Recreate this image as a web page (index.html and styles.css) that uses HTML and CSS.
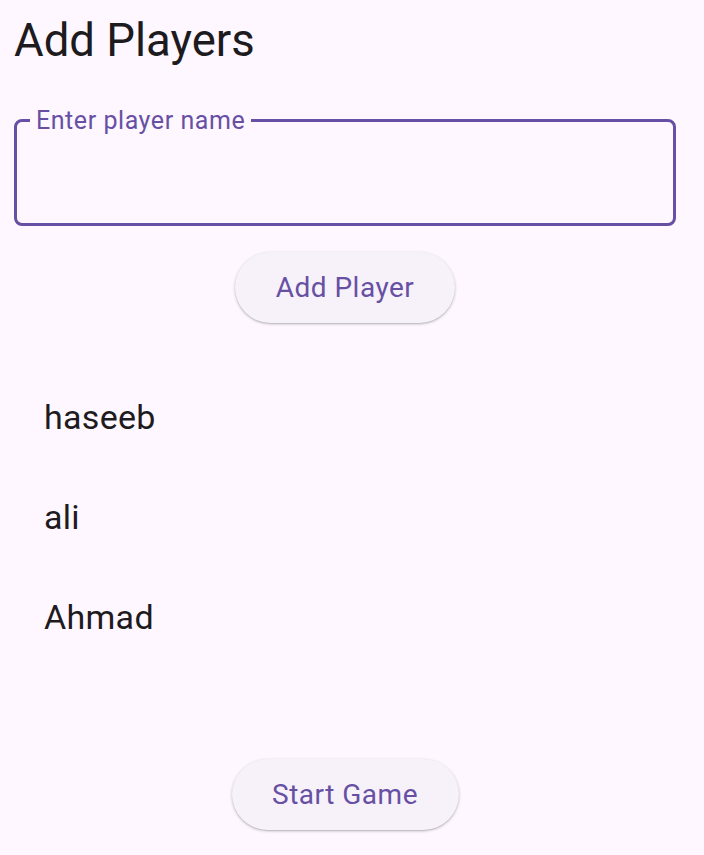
FILE: index.html
```html
<!DOCTYPE html>
<html>
<head>
<meta charset="utf-8">
<link rel="stylesheet" href="styles.css">
</head>
<body>
<div class="page">
  <h1 class="title">Add Players</h1>
  <fieldset class="field">
    <legend class="field-label">Enter player name</legend>
    <input class="field-input" type="text">
  </fieldset>
  <div class="center-row add-row">
    <button class="pill-btn add-btn">Add Player</button>
  </div>
  <ul class="players">
    <li class="player">haseeb</li>
    <li class="player">ali</li>
    <li class="player">Ahmad</li>
  </ul>
  <div class="center-row start-row">
    <button class="pill-btn start-btn">Start Game</button>
  </div>
</div>
</body>
</html>
```
FILE: styles.css
```css
html, body {
  margin: 0;
  padding: 0;
  background: #FEF7FF;
}
body {
  font-family: Roboto, "Noto Sans", sans-serif;
  color: #1D1B20;
}
.page {
  height: 855px;
  box-sizing: border-box;
  padding: 0 28px 0 14px;
  display: flex;
  flex-direction: column;
}
.title {
  margin: 18px 0 0 0;
  font-size: 45.5px;
  line-height: 45px;
  font-weight: 400;
  height: 45px;
}
.field {
  margin: 45px 0 0 0;
  padding: 0;
  border: 3px solid #6750A4;
  border-radius: 8px;
  min-width: 0;
}
.field-label {
  margin-left: 13px;
  padding: 0 6px;
  font-size: 25px;
  line-height: 25px;
  color: #6750A4;
  letter-spacing: 0.55px;
}
.field-input {
  display: block;
  border: 0;
  background: transparent;
  outline: none;
  width: 100%;
  height: 90px;
  font-size: 30px;
  font-family: inherit;
  padding: 0 20px;
  box-sizing: border-box;
}
.center-row {
  display: flex;
  justify-content: center;
}
.add-row {
  margin-top: 26px;
}
.pill-btn {
  border: 0;
  background: #F7F2FA;
  color: #6750A4;
  font-family: Roboto, "Noto Sans", sans-serif;
  font-size: 28px;
  letter-spacing: 0.5px;
  height: 71px;
  border-radius: 36px;
  box-shadow: 0 1px 3px rgba(0, 0, 0, 0.25), 0 1px 1px rgba(0, 0, 0, 0.08);
  padding: 0;
}
.add-btn {
  width: 220px;
}
.start-btn {
  width: 227px;
}
.players {
  list-style: none;
  margin: 44px 0 0 0;
  padding: 0;
}
.player {
  height: 100px;
  line-height: 100px;
  padding-left: 30px;
  font-size: 34px;
  letter-spacing: 0.3px;
}
.start-row {
  margin-top: auto;
  margin-bottom: 25px;
}
```
